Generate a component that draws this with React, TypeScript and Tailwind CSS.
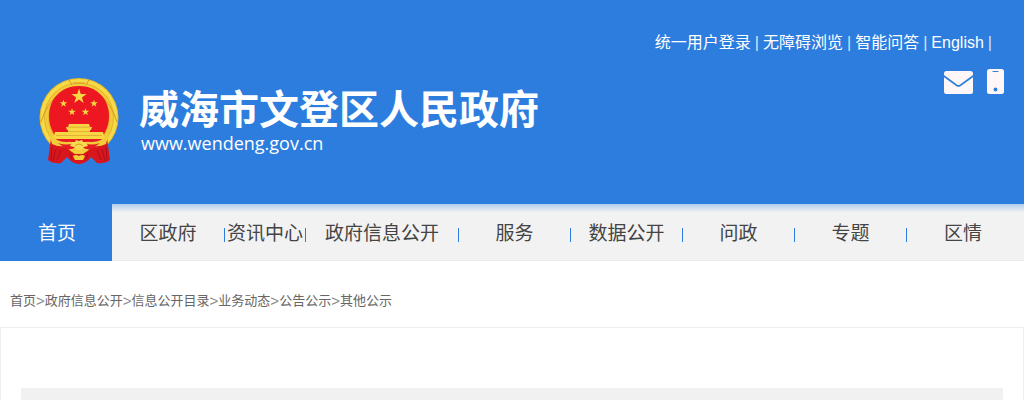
import React from "react";

const navItems = [
  { label: "区政府", basis: "grow-[113]" },
  { label: "资讯中心", basis: "grow-[81]" },
  { label: "政府信息公开", basis: "grow-[153]" },
  { label: "服务", basis: "grow-[112]" },
  { label: "数据公开", basis: "grow-[112]" },
  { label: "问政", basis: "grow-[112]" },
  { label: "专题", basis: "grow-[112]" },
  { label: "区情", basis: "grow-[112]" },
];

const crumbs = ["首页", "政府信息公开", "信息公开目录", "业务动态", "公告公示", "其他公示"];

const topLinks = ["统一用户登录", "无障碍浏览", "智能问答", "English"];

const STAR = "M0 -1L.2245 -.309L.951 -.309L.3633 .118L.5878 .809L0 .382L-.5878 .809L-.3633 .118L-.951 -.309L-.2245 -.309Z";

function Emblem() {
  return (
    <svg viewBox="0 0 80 88" className="h-[88px] w-20 shrink-0" aria-hidden="true">
      <circle cx="40" cy="40.500" r="39.500" fill="#e6b52c" />
      <circle cx="40" cy="40.500" r="36.800" fill="none" stroke="#f7da48" strokeWidth="3.500" />
      <circle cx="40" cy="40.500" r="32.500" fill="none" stroke="#f2cb3a" strokeWidth="3" />
      <path d="M2 45Q7 27 22 15M78 45Q73 27 58 15M30 3L33 8M50 3L47 8M40 6H34M40 6H46" stroke="#d29a28" strokeWidth="1" fill="none" />
      <path d="M40 9C58 9 70 22 70 39C70 51 64 60 58 66H22C16 60 10 51 10 39C10 22 22 9 40 9Z" fill="#ec1720" />
      <g fill="#f7d742">
        <path d={STAR} transform="translate(40 19.500) scale(8)" />
        <path d={STAR} transform="translate(24.500 26.500) scale(4)" />
        <path d={STAR} transform="translate(55 26.500) scale(4)" />
        <path d={STAR} transform="translate(33 35) scale(4)" />
        <path d={STAR} transform="translate(46.500 35) scale(4)" />
        <path d="M30 47h20l1 3h2l-1 3h-1v2h13l2 7H14l2-7h13v-2h-1l-1-3h2z" />
      </g>
      <path d="M29 50.200h22M29 54.500h22M17 58.500h46" stroke="#d8a02f" strokeWidth=".7" />
      <path d="M15 62H65V74H15Z" fill="#e51a22" />
      <path d="M12 61L9 83Q14 87 22 86L28 80Q33 87 40 87Q47 87 52 80L58 86Q66 87 71 83L68 61L61 70L40 73L19 70Z" fill="#d9151e" />
      <path d="M10 56Q18 66 29 65Q35 64 35 69L40 72L45 69Q45 64 51 65Q62 66 70 56L67 67Q61 70 54 69Q49 74 44 77H36Q31 74 26 69Q19 70 13 67Z" fill="#f3cd39" />
      <path d="M19 66Q28 69 34 66L37 70Q31 74 26 71ZM61 66Q52 69 46 66L43 70Q49 74 54 71Z" fill="#e51a22" />
      <path d="M31 69l2-4 3 0 1-2 3 1 3-1 1 2 3 0 2 4-4 1-3 3h-4l-3-3z" fill="#f8dc50" />
      <path d="M36 69Q40 65 44 69" stroke="#d99b2b" strokeWidth="1" fill="none" />
      <path d="M34 79Q37 77 40 79Q43 77 46 79L44 83H36Z" fill="#f3cd39" />
      <path d="M13 70l-1 13M17 72l-3 12M67 70l1 13M63 72l3 12M22 73l-4 10M58 73l4 10M31 76l2 6M49 76l-2 6" stroke="#ab1019" strokeWidth="1" />
    </svg>
  );
}

export default function App() {
  return (
    <div className="min-h-screen bg-white font-['Liberation_Sans','Noto_Sans_CJK_SC',sans-serif]">
      <header className="flex h-[204px] justify-between bg-[#2d7dde] text-white">
        <a href="#home" className="flex items-start gap-5 pt-[77px] pl-[39px]">
          <Emblem />
          <span className="block pt-2.5 font-['Noto_Sans_CJK_SC',sans-serif]">
            <span className="block text-[40px] leading-10 font-bold whitespace-nowrap">威海市文登区人民政府</span>
            <span className="block pt-0.5 pl-0.5 font-['Open_Sans',sans-serif] text-lg leading-7">www.wendeng.gov.cn</span>
          </span>
        </a>
        <div className="flex flex-col items-end pt-[31px]">
          <nav className="flex gap-1 pr-8 text-base leading-6 whitespace-nowrap">
            {topLinks.map((label) => (
              <React.Fragment key={label}>
                <a href="#top">{label}</a>
                <span className="opacity-80">|</span>
              </React.Fragment>
            ))}
          </nav>
          <div className="flex gap-3.5 pt-3.5 pr-5">
            <a href="#mail" aria-label="邮箱">
              <svg viewBox="0 0 29 25" className="h-[25px] w-[29px]">
                <path fill="#fff7f7" d="M2.500 2h24Q29 2 29 4.500V6L16 15.500Q14.500 16.500 13 15.500L0 6V4.500Q0 2 2.500 2ZM0 8.200L12.500 17.200Q14.500 18.500 16.500 17.200L29 8.200V22.500Q29 25 26.500 25H2.500Q0 25 0 22.500Z" />
              </svg>
            </a>
            <a href="#mobile" aria-label="手机版">
              <svg viewBox="0 0 17 25" className="h-[25px] w-[17px]">
                <rect width="17" height="25" rx="2.500" fill="#fff7f7" />
                <path d="M6 2.500h5" stroke="#2d7dde" strokeWidth="1" strokeLinecap="round" />
                <circle cx="8.500" cy="20.500" r="1.900" fill="#2d7dde" />
              </svg>
            </a>
          </div>
        </div>
      </header>

      <nav className="flex h-[57px] bg-[#f2f2f2] text-[19px] text-[#444]">
        <a href="#home" className="flex w-28 shrink-0 items-center justify-center bg-[#2d7dde] pt-1 pl-0.5 text-white">首页</a>
        <div className="flex grow border-b border-[#e9ecef] bg-linear-to-b from-[#b0cdee] via-[#f2f2f2] via-15% to-[#f2f2f2] pr-[5px]">
          {navItems.map((item, i) => (
            <a key={item.label} href="#nav" className={`flex min-w-0 basis-0 items-center pt-1 whitespace-nowrap ${item.basis}`}>
              <span className="min-w-0 grow text-center">{item.label}</span>
              {i < navItems.length - 1 && <span className="mt-0.5 h-3.5 w-px shrink-0 bg-[#2d7dde]" />}
            </a>
          ))}
        </div>
      </nav>

      <nav className="flex h-[66px] items-center px-2.5 pt-3.5 text-[15px] text-[#666]" aria-label="当前位置">
        {crumbs.map((label, i) => (
          <React.Fragment key={label}>
            {i > 0 && <span className="text-[#888]">&gt;</span>}
            <a href="#crumb" className="text-[13px]">{label}</a>
          </React.Fragment>
        ))}
      </nav>

      <main className="border border-b-0 border-[#eee] px-5 pt-[60px]">
        <div className="h-3 bg-[#f1f1f1]" />
      </main>
    </div>
  );
}
